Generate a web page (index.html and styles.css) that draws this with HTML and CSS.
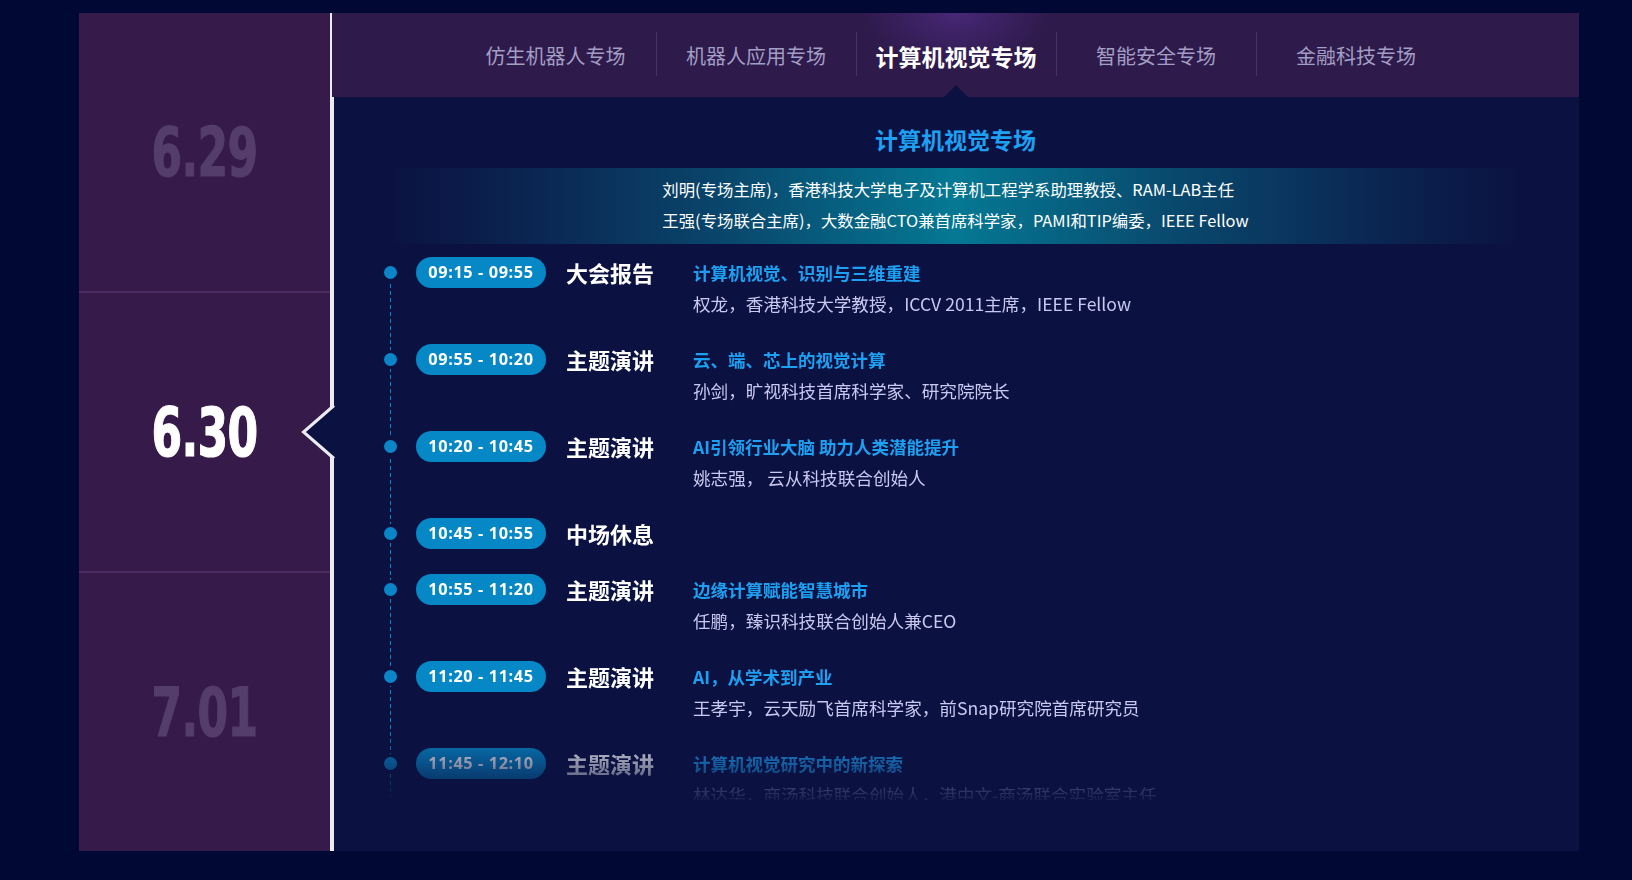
FILE: index.html
```html
<!DOCTYPE html>
<html lang="zh-CN">
<head>
<meta charset="utf-8">
<title>计算机视觉专场</title>
<link rel="stylesheet" href="styles.css">
</head>
<body>
<div class="board">
  <aside class="dates">
    <div class="date"><span class="num">6.29</span></div>
    <div class="date active"><span class="num">6.30</span>
      <svg class="notch" width="33" height="54" viewBox="0 0 33 54" aria-hidden="true">
        <polygon points="33,0.5 2.5,27 33,53.5" fill="#0b1242"/>
        <polyline points="33,0.5 2.5,27 33,53.5" fill="none" stroke="#ecebf2" stroke-width="3"/>
      </svg>
    </div>
    <div class="date"><span class="num">7.01</span></div>
  </aside>
  <section class="main">
    <nav class="tabs">
      <a class="tab">仿生机器人专场</a>
      <a class="tab">机器人应用专场</a>
      <a class="tab active">计算机视觉专场</a>
      <a class="tab">智能安全专场</a>
      <a class="tab">金融科技专场</a>
    </nav>
    <div class="content">
      <header class="session-head">
        <h2 class="session-title">计算机视觉专场</h2>
        <div class="chairs">
          <div class="chairs-inner">
            <p>刘明(专场主席)，香港科技大学电子及计算机工程学系助理教授、RAM-LAB主任</p>
            <p>王强(专场联合主席)，大数金融CTO兼首席科学家，PAMI和TIP编委，IEEE Fellow</p>
          </div>
        </div>
      </header>
      <ul class="timeline">
        <li class="item">
          <span class="dot"></span>
          <span class="time">09:15 - 09:55</span>
          <span class="kind">大会报告</span>
          <div class="talk">
            <div class="talk-title">计算机视觉、识别与三维重建</div>
            <div class="speaker">权龙，香港科技大学教授，ICCV 2011主席，IEEE Fellow</div>
          </div>
        </li>
        <li class="item">
          <span class="dot"></span>
          <span class="time">09:55 - 10:20</span>
          <span class="kind">主题演讲</span>
          <div class="talk">
            <div class="talk-title">云、端、芯上的视觉计算</div>
            <div class="speaker">孙剑，旷视科技首席科学家、研究院院长</div>
          </div>
        </li>
        <li class="item">
          <span class="dot"></span>
          <span class="time">10:20 - 10:45</span>
          <span class="kind">主题演讲</span>
          <div class="talk">
            <div class="talk-title">AI引领行业大脑 助力人类潜能提升</div>
            <div class="speaker">姚志强， 云从科技联合创始人</div>
          </div>
        </li>
        <li class="item">
          <span class="dot"></span>
          <span class="time">10:45 - 10:55</span>
          <span class="kind">中场休息</span>
        </li>
        <li class="item">
          <span class="dot"></span>
          <span class="time">10:55 - 11:20</span>
          <span class="kind">主题演讲</span>
          <div class="talk">
            <div class="talk-title">边缘计算赋能智慧城市</div>
            <div class="speaker">任鹏，臻识科技联合创始人兼CEO</div>
          </div>
        </li>
        <li class="item">
          <span class="dot"></span>
          <span class="time">11:20 - 11:45</span>
          <span class="kind">主题演讲</span>
          <div class="talk">
            <div class="talk-title">AI，从学术到产业</div>
            <div class="speaker">王孝宇，云天励飞首席科学家，前Snap研究院首席研究员</div>
          </div>
        </li>
        <li class="item">
          <span class="dot"></span>
          <span class="time">11:45 - 12:10</span>
          <span class="kind">主题演讲</span>
          <div class="talk">
            <div class="talk-title">计算机视觉研究中的新探索</div>
            <div class="speaker">林达华，商汤科技联合创始人，港中文-商汤联合实验室主任</div>
          </div>
        </li>
      </ul>
    </div>
  </section>
</div>
</body>
</html>
```
FILE: styles.css
```css
* { box-sizing: border-box; }
html, body { margin: 0; padding: 0; }
body {
  background: #000833;
  font-family: "Noto Sans CJK SC", "Noto Sans", sans-serif;
  width: 1632px;
  height: 880px;
  overflow: hidden;
}
.board {
  display: flex;
  width: 1500px;
  height: 838px;
  margin: 13px 0 0 79px;
}

/* ---------- dates ---------- */
.dates {
  width: 255px;
  display: flex;
  flex-direction: column;
  background: #361a4a;
  border-right: 4px solid #ecebf2;
}
.date {
  flex: 1;
  display: flex;
  align-items: center;
  justify-content: center;
  font-family: "DejaVu Sans Condensed", "DejaVu Sans", sans-serif;
  font-weight: 700;
  font-size: 68px;
  color: #553d6b;
}
.num {
  display: inline-block;
  transform: scaleX(0.72);
  letter-spacing: -1px;
  -webkit-text-stroke: 1.2px currentColor;
}
.date + .date { border-top: 2px solid #4b2d62; }
.date.active { color: #ffffff; position: relative; }
.notch {
  position: absolute;
  right: -4px;
  top: 50%;
  margin-top: -27px;
  overflow: visible;
}

/* ---------- main ---------- */
.main {
  flex: 1;
  display: flex;
  flex-direction: column;
  background: #0b1242;
}
.tabs {
  height: 84px;
  background: #2e1a4b;
  display: flex;
  justify-content: center;
  padding: 19px 0 0 0;
  margin-left: -2px;
}
.tab {
  width: 200px;
  height: 44px;
  padding-top: 4px;
  line-height: 40px;
  text-align: center;
  font-size: 20px;
  color: #a29ec4;
}
.tab + .tab { border-left: 1px solid #4a3064; }
.tab.active {
  position: relative;
  z-index: 0;
  font-size: 23px;
  font-weight: 700;
  color: #ffffff;
}
.tab.active::before {
  content: "";
  position: absolute;
  z-index: -1;
  left: -10px;
  right: -10px;
  top: -19px;
  height: 84px;
  background: radial-gradient(ellipse 95px 55px at 50% 0, rgba(72, 40, 120, 0.95), rgba(72, 40, 120, 0) 100%);
}
.tab.active::after {
  content: "";
  position: absolute;
  left: 50%;
  bottom: -21px;
  margin-left: -12px;
  border-left: 12px solid transparent;
  border-right: 12px solid transparent;
  border-bottom: 12px solid #0b1242;
}

.content {
  flex: 1;
  padding: 27px 58px 0 50px;
}
.session-head { margin-left: 6px; }
.session-title {
  margin: 0;
  text-align: center;
  font-size: 23px;
  line-height: 30px;
  font-weight: 700;
  color: #1ea0f2;
}
.chairs {
  margin-top: 14px;
  height: 76px;
  padding: 6px 0 0 0;
  display: flex;
  justify-content: center;
  background: linear-gradient(90deg,
    rgba(7, 124, 150, 0) 0%,
    rgba(7, 124, 150, 0.14) 10%,
    rgba(7, 124, 150, 0.5) 30%,
    rgba(4, 126, 152, 0.95) 50%,
    rgba(7, 124, 150, 0.5) 70%,
    rgba(7, 124, 150, 0.14) 90%,
    rgba(7, 124, 150, 0) 100%);
}
.chairs-inner p {
  margin: 0;
  font-size: 16.4px;
  line-height: 31px;
  color: #ffffff;
}

/* ---------- timeline ---------- */
.timeline {
  position: relative;
  list-style: none;
  margin: 13px 0 0 0;
  padding: 0;
  height: 543px;
  overflow: hidden;
  -webkit-mask-image: linear-gradient(to bottom, #000 0, #000 470px, rgba(0,0,0,0.08) 543px);
  mask-image: linear-gradient(to bottom, #000 0, #000 470px, rgba(0,0,0,0.08) 543px);
}
.timeline::before {
  content: "";
  position: absolute;
  left: 6px;
  top: 20px;
  bottom: 0;
  width: 1px;
  background: repeating-linear-gradient(to bottom, #0a86c8 0 4px, transparent 4px 7px);
}
.item {
  display: flex;
  align-items: flex-start;
  padding-bottom: 25px;
}
.dot {
  position: relative;
  flex: none;
  width: 13px;
  height: 13px;
  margin-top: 9px;
  margin-right: 19px;
  border-radius: 50%;
  background: #0a86c8;
  box-shadow: 0 0 0 3px #0b1242;
}
.time {
  flex: none;
  width: 130px;
  height: 31px;
  line-height: 31px;
  border-radius: 16px;
  background: #0687c6;
  text-align: center;
  font-family: "Open Sans", "Noto Sans", sans-serif;
  font-weight: 700;
  font-size: 16.3px;
  letter-spacing: 0.6px;
  color: #ffffff;
}
.kind {
  flex: none;
  width: 127px;
  margin-left: 20px;
  line-height: 31px;
  font-size: 22px;
  font-weight: 700;
  color: #ffffff;
}
.talk { flex: 1; }
.talk-title {
  font-size: 17.5px;
  line-height: 31px;
  font-weight: 700;
  color: #1ea0f2;
}
.speaker {
  font-size: 17.6px;
  line-height: 31px;
  color: #c8c8f0;
}
```
